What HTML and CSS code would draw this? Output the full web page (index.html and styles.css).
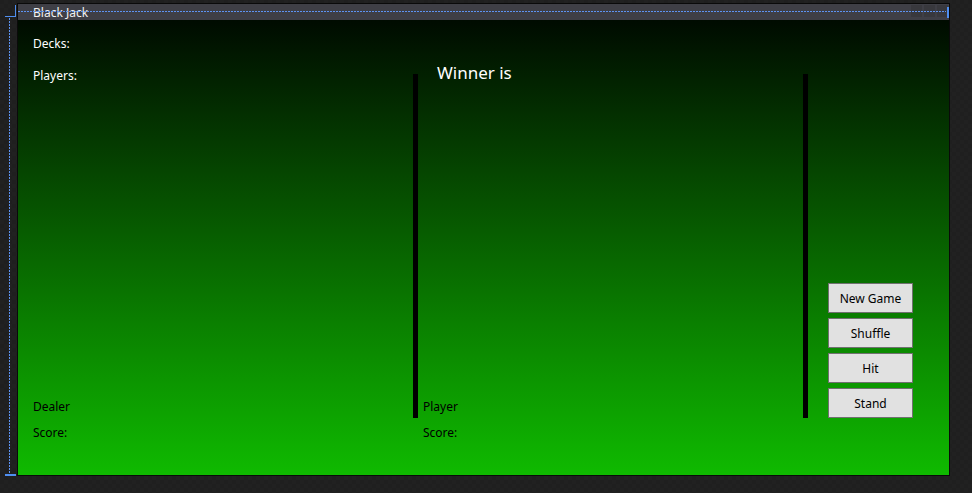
FILE: index.html
```html
<!DOCTYPE html>
<html>
<head>
<meta charset="utf-8">
<link rel="stylesheet" href="styles.css">
</head>
<body>
<div class="stage">
  <div class="adorn corner-v"></div>
  <div class="adorn corner-h"></div>
  <div class="adorn side-dots"></div>
  <div class="adorn bottom-h"></div>
  <div class="window">
    <div class="titlebar">
      <span class="title">Black Jack</span>
      <div class="adorn title-dots"></div>
      <div class="adorn title-mark"></div>
      <div class="tbtns"><span class="tbtn"></span><span class="tbtn"></span><span class="tbtn"></span></div>
    </div>
    <div class="content">
      <div class="col left">
        <div class="lbl light">Decks:</div>
        <div class="lbl light players">Players:</div>
        <div class="lbl dark dealer">Dealer</div>
        <div class="lbl dark score">Score:</div>
      </div>
      <div class="bar"></div>
      <div class="col mid">
        <div class="winner">Winner is</div>
        <div class="lbl dark dealer">Player</div>
        <div class="lbl dark score">Score:</div>
      </div>
      <div class="bar"></div>
      <div class="col right">
        <button class="btn">New Game</button>
        <button class="btn">Shuffle</button>
        <button class="btn">Hit</button>
        <button class="btn">Stand</button>
      </div>
    </div>
  </div>
</div>
</body>
</html>
```
FILE: styles.css
```css
html, body {
  margin: 0;
  padding: 0;
  background: #1f1f1f;
  font-family: "Noto Sans", "Open Sans", sans-serif;
  font-size: 12px;
}
.stage {
  position: relative;
  width: 972px;
  height: 493px;
  padding: 3px 0 0 17px;
  box-sizing: border-box;
  background-color: #1f1f1f;
  background-image:
    linear-gradient(45deg, #212121 25%, transparent 25%, transparent 75%, #212121 75%),
    linear-gradient(45deg, #212121 25%, transparent 25%, transparent 75%, #212121 75%);
  background-size: 8px 8px;
  background-position: 0 0, 4px 4px;
}
.window {
  width: 933px;
  height: 473px;
  box-sizing: border-box;
  border: 1px solid #0a0a0a;
  display: flex;
  flex-direction: column;
}
.titlebar {
  position: relative;
  height: 16px;
  overflow: hidden;
  background: #3f3f46;
  flex: none;
}
.title {
  display: block;
  padding: 1px 0 0 15px;
  line-height: 16px;
  color: #f1f1f1;
}
.tbtns {
  position: absolute;
  right: 1px;
  top: 1px;
  display: flex;
  gap: 2px;
}
.tbtn {
  width: 11px;
  height: 12px;
  background: #38383d;
}
.adorn { position: absolute; }
.title-dots {
  left: 0;
  right: 3px;
  top: 7px;
  height: 1px;
  background: repeating-linear-gradient(90deg, #5d93f2 0 2px, transparent 2px 3px);
  z-index: 2;
}
.title-mark {
  right: 0;
  top: 3px;
  width: 2px;
  height: 11px;
  background: #4f8ef0;
  z-index: 2;
}
.corner-v {
  left: 15px;
  top: 5px;
  width: 1px;
  height: 12px;
  background: #4f8ef0;
}
.corner-h {
  left: 5px;
  top: 16px;
  width: 11px;
  height: 1px;
  background: #4f8ef0;
}
.side-dots {
  left: 9px;
  top: 18px;
  width: 1px;
  height: 456px;
  background: repeating-linear-gradient(180deg, #5d93f2 0 2px, transparent 2px 3px);
}
.bottom-h {
  left: 5px;
  top: 474px;
  width: 11px;
  height: 2px;
  background: #4f8ef0;
}
.content {
  flex: 1;
  display: flex;
  background: linear-gradient(180deg, #000b00 0%, #0fba00 100%);
}
.col {
  display: flex;
  flex-direction: column;
  box-sizing: border-box;
}
.left {
  width: 395px;
  padding: 16px 0 34px 15px;
}
.mid {
  width: 385px;
  padding: 41px 0 34px 5px;
}
.right {
  flex: 1;
  padding: 0 0 57px 20px;
  justify-content: flex-end;
  gap: 5px;
}
.lbl {
  line-height: 16px;
}
.light { color: #ffffff; }
.dark { color: #000000; }
.players { margin-top: 16px; }
.dealer { margin-top: auto; }
.score { margin-top: 10px; }
.winner {
  margin-left: 14px;
  font-size: 17px;
  line-height: 24px;
  color: #ffffff;
}
.bar {
  width: 5px;
  margin-top: 54px;
  height: 344px;
  background: #000;
  flex: none;
}
.btn {
  width: 85px;
  height: 30px;
  margin: 0;
  padding: 0;
  border: 1px solid #707070;
  background: #e1e1e1;
  font-family: "Noto Sans", "Open Sans", sans-serif;
  font-size: 12px;
  color: #000;
}
```
